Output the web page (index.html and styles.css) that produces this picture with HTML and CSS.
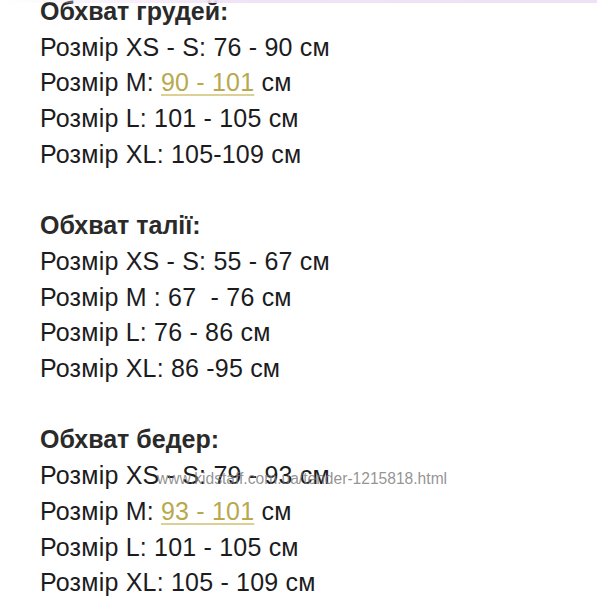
FILE: index.html
```html
<!DOCTYPE html>
<html lang="uk">
<head>
<meta charset="utf-8">
<link rel="stylesheet" href="styles.css">
</head>
<body>
<div class="topline"></div>
<main class="sizes">
  <section class="group">
    <h2 class="title">Обхват грудей:</h2>
    <p class="row">Розмір XS - S: 76 - 90 см</p>
    <p class="row">Розмір M: <a class="link">90 - 101</a> см</p>
    <p class="row">Розмір L: 101 - 105 см</p>
    <p class="row">Розмір XL: 105-109 см</p>
  </section>
  <section class="group">
    <h2 class="title">Обхват талії:</h2>
    <p class="row">Розмір XS - S: 55 - 67 см</p>
    <p class="row">Розмір M : 67 &nbsp;- 76 см</p>
    <p class="row">Розмір L: 76 - 86 см</p>
    <p class="row">Розмір XL: 86 -95 см</p>
  </section>
  <section class="group">
    <h2 class="title">Обхват бедер:</h2>
    <p class="row wm-row">Розмір XS - S: 79 - 93 см<span class="watermark">www.kidstaff.com.ua/tender-1215818.html</span></p>
    <p class="row">Розмір M: <a class="link">93 - 101</a> см</p>
    <p class="row">Розмір L: 101 - 105 см</p>
    <p class="row">Розмір XL: 105 - 109 см</p>
  </section>
</main>
</body>
</html>
```
FILE: styles.css
```css
html, body {
  margin: 0;
  padding: 0;
  background: #ffffff;
  overflow: hidden;
}
body {
  width: 597px;
  height: 600px;
  position: relative;
  font-family: "Liberation Sans", Arial, sans-serif;
  color: #1c1c1e;
}
.topline {
  position: absolute;
  left: 0;
  top: 0;
  width: 597px;
  height: 3px;
  background: linear-gradient(to right, rgba(240,225,245,0) 0%, #f1e2f6 40%, #efe0f5 100%);
}
.sizes {
  display: flex;
  flex-direction: column;
  gap: 35.7px;
  padding-left: 40px;
  margin-top: -6px;
}
.group {
  display: flex;
  flex-direction: column;
}
.title, .row {
  margin: 0;
  font-size: 25px;
  line-height: 35.7px;
  white-space: pre;
}
.title {
  font-weight: 700;
  color: #2a2a2a;
}
.row {
  font-weight: 400;
  letter-spacing: 0.2px;
}
.link {
  color: #b8a94e;
  text-decoration: underline;
  text-decoration-color: #ddd095;
  text-decoration-thickness: 1.5px;
  text-underline-offset: 3px;
}
.wm-row {
  position: relative;
}
.watermark {
  position: absolute;
  left: 117px;
  top: 3px;
  font-size: 15.6px;
  line-height: 35.7px;
  letter-spacing: 0;
  color: rgba(120,120,120,0.8);
}
```
